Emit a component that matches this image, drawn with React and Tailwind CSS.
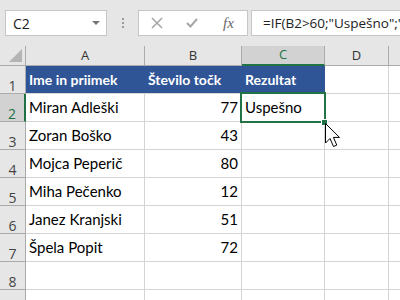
import React from "react";

const rows = [
  ["Miran Adleški", "77"],
  ["Zoran Boško", "43"],
  ["Mojca Peperič", "80"],
  ["Miha Pečenko", "12"],
  ["Janez Kranjski", "51"],
  ["Špela Popit", "72"],
];

function RowHead({ n, active }) {
  return (
    <div
      className={
        "w-[26px] shrink-0 flex items-end justify-center pb-0 leading-none text-[14px] border-r border-b " +
        (active
          ? "bg-[#d2d2d2] text-[#217346] border-r-[#217346] border-r-2 border-b-[#ababab]"
          : "bg-[#e6e6e6] text-[#444444] border-[#ababab]")
      }
      style={{ fontFamily: "'Open Sans', 'Noto Sans', sans-serif" }}
    >
      {n}
    </div>
  );
}

export default function App() {
  return (
    <div className="w-[400px] h-[300px] overflow-hidden bg-white relative" style={{ fontFamily: "Lato, 'Liberation Sans', sans-serif" }}>
      {/* formula bar */}
      <div className="h-[46px] bg-[#e6e6e6] flex items-start pt-[10px] pl-[5px]" style={{ fontFamily: "'Open Sans', 'Noto Sans', sans-serif" }}>
        <div className="w-[102px] h-[26px] bg-white border border-[#c6c6c6] flex items-center justify-between pl-[7px] pr-[6px] text-[14px] text-[#222]">
          <span>C2</span>
          <svg width="8" height="4" viewBox="0 0 8 4"><path d="M0 0 H8 L4 4 Z" fill="#777" /></svg>
        </div>
        <div className="w-[31px] h-[26px] flex flex-col items-center justify-center gap-[2px]">
          <div className="w-[2px] h-[2px] bg-[#9a9a9a]" />
          <div className="w-[2px] h-[2px] bg-[#9a9a9a]" />
          <div className="w-[2px] h-[2px] bg-[#9a9a9a]" />
        </div>
        <div className="w-[110px] h-[26px] bg-white border border-[#c6c6c6] flex items-center">
          <svg className="ml-[12px]" width="12" height="12" viewBox="0 0 12 12"><path d="M1 1 L11 11 M11 1 L1 11" stroke="#a6a6a6" strokeWidth="1.6" /></svg>
          <svg className="ml-[23px]" width="12" height="10" viewBox="0 0 12 10"><path d="M1 5 L4.5 8.5 L11 1" stroke="#a6a6a6" strokeWidth="2" fill="none" /></svg>
          <span className="ml-[25px] text-[15px] text-[#666] italic" style={{ fontFamily: "'Liberation Serif', serif" }}>fx</span>
        </div>
        <div className="ml-[3px] flex-1 h-[26px] bg-white border border-r-0 border-[#c6c6c6] flex items-center pl-[11px] text-[13.5px] text-[#222] whitespace-nowrap overflow-hidden">
          =IF(B2&gt;60;"Uspešno";"
        </div>
      </div>

      {/* column headers */}
      <div className="flex h-[20px] text-[13px] text-[#333]" style={{ fontFamily: "'Open Sans', 'Noto Sans', sans-serif" }}>
        <div className="w-[26px] shrink-0 bg-[#e6e6e6] border-r border-b border-[#ababab] relative">
          <svg className="absolute left-[9px] top-[3px]" width="14" height="14" viewBox="0 0 14 14"><path d="M13 0 V13 H0 Z" fill="#b4b4b4" /></svg>
        </div>
        <div className="w-[119px] shrink-0 bg-[#e6e6e6] border-r border-b border-[#ababab] flex items-center justify-center">A</div>
        <div className="w-[97px] shrink-0 bg-[#e6e6e6] border-r border-b border-[#ababab] flex items-center justify-center">B</div>
        <div className="w-[83px] shrink-0 bg-[#d2d2d2] border-r border-[#ababab] border-b-2 border-b-[#217346] text-[#217346] flex items-center justify-center">C</div>
        <div className="w-[64px] shrink-0 bg-[#e6e6e6] border-r border-b border-[#ababab] flex items-center justify-center">D</div>
        <div className="flex-1 bg-[#e6e6e6] border-b border-[#ababab]" />
      </div>

      {/* row 1 header */}
      <div className="flex h-[28px] text-[14px]">
        <RowHead n="1" />
        <div className="w-[299px] shrink-0 bg-[#2f5597] border-b border-[#d4d4d4] flex items-end pb-[3px] text-white font-bold">
          <div className="w-[119px] pl-[3px]">Ime in priimek</div>
          <div className="w-[97px] pl-[3px]">Število točk</div>
          <div className="w-[83px] pl-[3px]">Rezultat</div>
        </div>
        <div className="w-[64px] shrink-0 border-r border-b border-[#d4d4d4]" />
        <div className="flex-1 border-b border-[#d4d4d4]" />
      </div>

      {rows.map((r, i) => (
        <div key={i} className="flex h-[28px] text-[15px] text-black">
          <RowHead n={String(i + 2)} active={i === 0} />
          <div className="w-[119px] shrink-0 border-r border-b border-[#d4d4d4] flex items-end pb-[3px] pl-[3px] whitespace-nowrap">{r[0]}</div>
          <div className="w-[97px] shrink-0 border-r border-b border-[#d4d4d4] flex items-end justify-end pb-[3px] pr-[3px]">{r[1]}</div>
          <div className="w-[83px] shrink-0 border-r border-b border-[#d4d4d4] flex items-end pb-[3px] pl-[3px]">{i === 0 ? "Uspešno" : ""}</div>
          <div className="w-[64px] shrink-0 border-r border-b border-[#d4d4d4]" />
          <div className="flex-1 border-b border-[#d4d4d4]" />
        </div>
      ))}

      {[8, 9].map((n) => (
        <div key={n} className="flex h-[28px] text-[15px]">
          <RowHead n={n === 8 ? "8" : ""} />
          <div className="w-[119px] shrink-0 border-r border-b border-[#d4d4d4]" />
          <div className="w-[97px] shrink-0 border-r border-b border-[#d4d4d4]" />
          <div className="w-[83px] shrink-0 border-r border-b border-[#d4d4d4]" />
          <div className="w-[64px] shrink-0 border-r border-b border-[#d4d4d4]" />
          <div className="flex-1 border-b border-[#d4d4d4]" />
        </div>
      ))}

      {/* selection */}
      <div className="absolute left-[240px] top-[92px] w-[86px] h-[31px] border-2 border-[#217346]" />
      <div className="absolute left-[321px] top-[119px] w-[7px] h-[7px] bg-[#217346] border border-white" />

      {/* cursor */}
      <svg className="absolute left-[325px] top-[123px]" width="18" height="26" viewBox="0 0 18 26">
        <path d="M0.5 0.5 L0.5 20 L5 15.5 L8.5 23.5 L11.8 22.1 L8.4 14.4 L14.5 14.4 Z" fill="white" stroke="black" strokeWidth="1" strokeLinejoin="miter" />
      </svg>
    </div>
  );
}
